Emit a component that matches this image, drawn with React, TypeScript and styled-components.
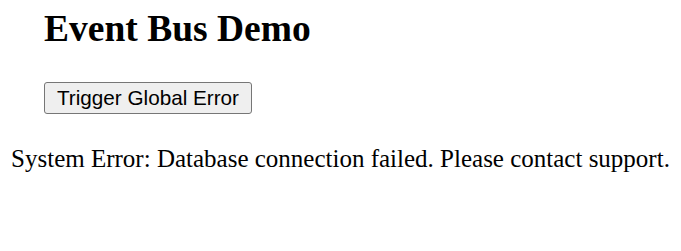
import React from "react";
import styled, { createGlobalStyle } from "styled-components";

const GlobalStyle = createGlobalStyle`
  html, body { margin: 0; padding: 0; background: #ffffff; }
  body { font-family: "Liberation Serif", "Times New Roman", serif; color: #000; }
`;

const Page = styled.div`
  display: flex;
  flex-direction: column;
  padding-top: 7px;
`;

const Section = styled.div`
  display: flex;
  flex-direction: column;
  align-items: flex-start;
  padding-left: 44px;
`;

const Title = styled.h1`
  margin: 0;
  font-family: "Liberation Serif", "Times New Roman", serif;
  font-size: 37.5px;
  font-weight: bold;
  line-height: 1.15;
`;

const TriggerButton = styled.button`
  margin-top: 32px;
  width: 208px;
  height: 32px;
  padding: 0;
  font-family: "Liberation Sans", Arial, sans-serif;
  font-size: 20.7px;
  color: #000;
  background: #efefef;
  border: 1px solid #767676;
  border-radius: 3px;
  cursor: pointer;
`;

const ErrorMessage = styled.p`
  margin: 31px 0 0;
  text-align: center;
  font-family: "Liberation Serif", "Times New Roman", serif;
  font-size: 25px;
  line-height: 1.15;
`;

export default function App() {
  return (
    <>
      <GlobalStyle />
      <Page>
        <Section>
          <Title>Event Bus Demo</Title>
          <TriggerButton>Trigger Global Error</TriggerButton>
        </Section>
        <ErrorMessage>
          System Error: Database connection failed. Please contact support.
        </ErrorMessage>
      </Page>
    </>
  );
}
